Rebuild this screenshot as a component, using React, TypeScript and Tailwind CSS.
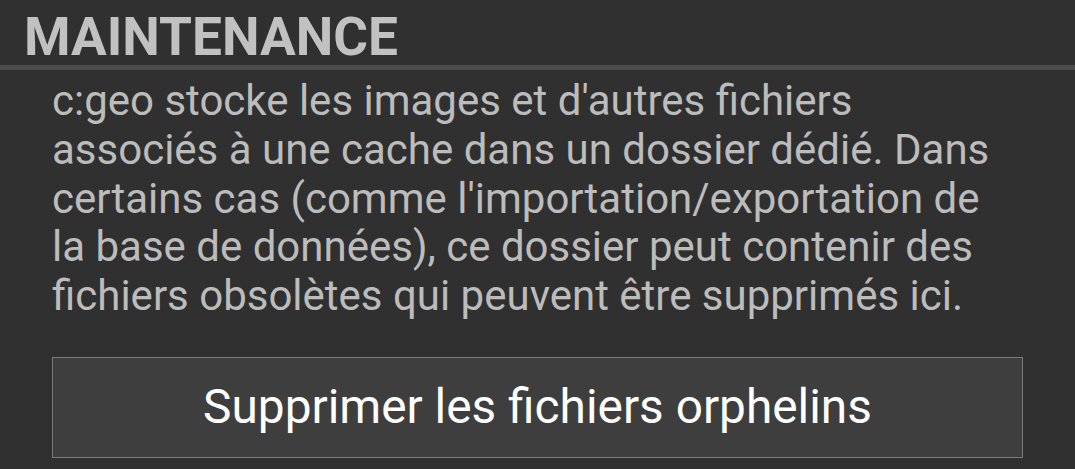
import React from 'react';

const lines = [
  "c:geo stocke les images et d'autres fichiers",
  'associés à une cache dans un dossier dédié. Dans',
  "certains cas (comme l'importation/exportation de",
  'la base de données), ce dossier peut contenir des',
  'fichiers obsolètes qui peuvent être supprimés ici.',
];

const App: React.FC = () => {
  return (
    <div className="w-[1075px] h-[469px] bg-[#303030] overflow-hidden font-['Roboto',sans-serif]">
      <div className="pt-[10px] pl-[24px]">
        <h1 className="text-[53.2px] leading-[55px] font-bold text-[#c1c1c1]">MAINTENANCE</h1>
      </div>
      <div className="h-[5px] bg-[#4b4b4b]" />
      <div className="px-[52px] pt-[7px]">
        <p className="text-[42px] leading-[48.75px] text-[#bcbcbc] whitespace-nowrap">
          {lines.map((l, i) => (
            <span key={i} className="block">
              {l}
            </span>
          ))}
        </p>
        <button className="mt-[36px] w-full h-[101px] pt-[2px] border border-[#7a7a7a] bg-[#3e3e3e] text-white text-[47.8px] flex items-center justify-center">
          Supprimer les fichiers orphelins
        </button>
      </div>
    </div>
  );
};

export default App;
